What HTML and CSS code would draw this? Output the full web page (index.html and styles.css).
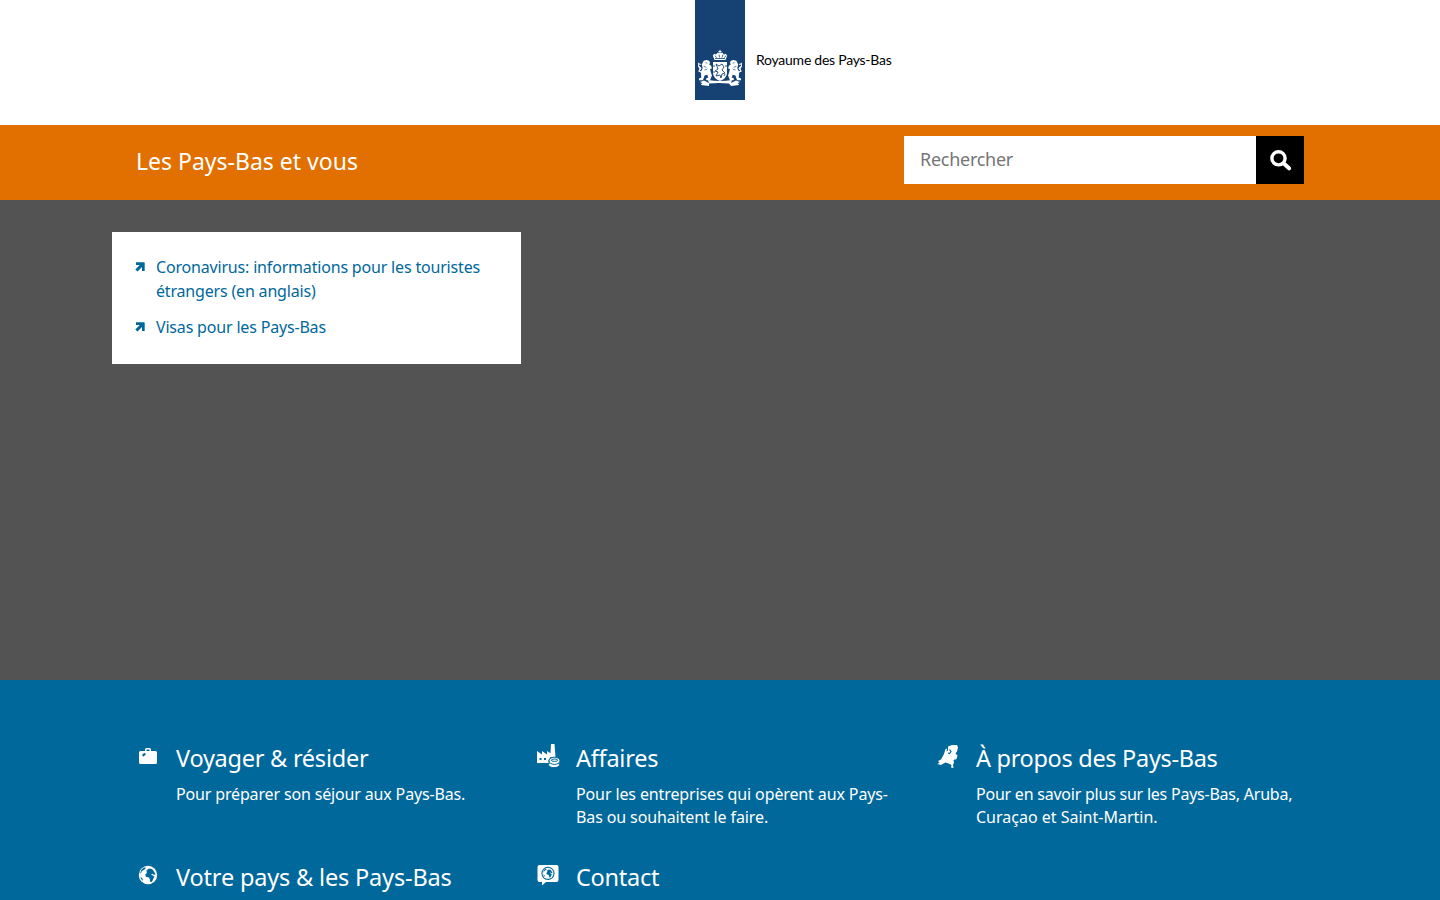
FILE: index.html
```html
<!DOCTYPE html>
<html lang="fr">
<head>
<meta charset="utf-8">
<title>Les Pays-Bas et vous</title>
<link rel="stylesheet" href="styles.css">
</head>
<body>
<svg class="defs" aria-hidden="true">
  <symbol id="external" viewBox="0 0 10 10"><path d="M1 .3h8q.7 0 .7.700v8H7V5L2.500 9.600.3 7.400 4.800 2.900H1z"/></symbol>
  <symbol id="globe" viewBox="0 0 20 20"><circle cx="10" cy="10" r="9.200" fill="#fff"/><path fill="#01689b" d="M8.500 5.500L11 3.500l3 .5 2 2.500 1.500 3-2 .3-1-1-1.500.4 2 1.600 1.500 1-1.200 2-1.300 3-1.800.2-.4-3-1.300-1.700-2.500-.4-.7-2.400 1.500-1.500zM6 2.500L8 2.800 6.500 4.500 4 6l-1 2-1 .5L3.500 4.500zM2.500 12l2 1.500L5 16l-2-2z"/></symbol>
  <symbol id="lion" viewBox="0 0 15 26">
    <path d="M6 2l3-1 3 1 1 2-1 2 2 1 1 3-2 1 1 4 1 3-2 5H9l-.5-2 2.500-1-1-3-3 1-1 3-1 2H1v-2l2.500-1L3 14l2-4-1-4z"/>
    <path fill="none" stroke="#fff" stroke-width="1.300" d="M5 15L1 13l2-3-3-3V4M0 5l3 1"/>
    <path fill="none" stroke="#154273" stroke-width=".7" d="M8 4l2 .5M6 8l3 1M7 12l3-1"/>
  </symbol>
</svg>
<header class="masthead">
  <div class="brand">
    <div class="ribbon">
      <svg class="arms" viewBox="0 0 46 37" fill="#fff">
        <path d="M17.500 10L15.800 5.500l1.500-1.700 1.700.7 1.800-2 1.700.7V2h-1V1h1V0h1v1h1v1h-1v1.200l1.700-.7 1.800 2 1.700-.7 1.500 1.700L28.500 10z"/>
        <path d="M18 5.500l1.500 2.300M22 4.500l.5 3M26 4.500l-1 3M29 5.500l-1.500 2.300M18 8.500h10" stroke="#154273" stroke-width=".8"/>
        <use href="#lion" x="1" y="9" width="14" height="24"/>
        <use href="#lion" width="14" height="24" transform="translate(45 9) scale(-1 1)"/>
        <path d="M1 16l3 2-1 2zM45 16l-3 2 1 2z"/>
        <path d="M16 12h14v11q0 5-7 8-7-3-7-8z"/>
        <path d="M19 14l3 2 3-2 2 3-2 3 3 3-3 1-1 4-1-3-4 1 2-4-3-1 3-2zM17 15v2M29 15v2M17 21v2M28 24l-1 2" fill="none" stroke="#154273" stroke-width=".9"/>
        <path d="M3 32l4-1.500L12 33l-1-3q12 2 24 0l-1 3 5-2.500 4 1.500-2 1 1 2-8 1-2-2.500q-10-1-20 0L12 36l-8-1 1-2z"/>
      </svg>
    </div>
    <span class="kingdom">Royaume des Pays-Bas</span>
  </div>
</header>
<div class="titlebar">
  <div class="container titlebar-inner">
    <span class="site-title">Les Pays-Bas et vous</span>
    <form class="search">
      <input type="text" placeholder="Rechercher" aria-label="Rechercher">
      <button type="button" aria-label="Rechercher"><svg viewBox="0 0 22 22" width="22" height="22" fill="none" stroke="#fff"><circle cx="8.500" cy="8.300" r="6.600" stroke-width="3.400"/><path d="M13.800 13.500l5.300 4.800" stroke-width="4" stroke-linecap="round"/></svg></button>
    </form>
  </div>
</div>
<main class="hero">
  <div class="container">
    <ul class="links">
      <li><svg class="arrow"><use href="#external"/></svg><a>Coronavirus: informations pour les touristes<br>étrangers (en anglais)</a></li>
      <li><svg class="arrow"><use href="#external"/></svg><a>Visas pour les Pays-Bas</a></li>
    </ul>
  </div>
</main>
<section class="topics">
  <div class="container grid">
    <article class="topic">
      <svg class="icon" viewBox="0 0 24 24"><path fill="#fff" fill-rule="evenodd" d="M9 7V5.500Q9 4 10.500 4h3Q15 4 15 5.500V7h4.500Q21 7 21 8.500v10q0 1.500-1.500 1.500h-15Q3 20 3 18.500v-10Q3 7 4.500 7zm1.500-1.500V7h3V5.500z"/><path d="M7.300 11.300l1.200-1.200" stroke="#01689b" stroke-width="2.200" stroke-linecap="round"/></svg>
      <div><h2>Voyager &amp; résider</h2><p class="travel">Pour préparer son séjour aux Pays-Bas.</p></div>
    </article>
    <article class="topic">
      <svg class="icon" viewBox="0 0 24 24"><path fill="#fff" d="M1 19V7l5 3.500V7l5 3.500V7l3.500 2.200L15 0h3.500L19.500 13h-5l-2 3v3z"/><path fill="#01689b" d="M3.500 14h2v2h-2zM8 14h2v2H8z"/><g fill="#fff" stroke="#01689b" stroke-width="1"><ellipse cx="18" cy="20.700" rx="5.500" ry="3"/><ellipse cx="18.500" cy="16.800" rx="5.500" ry="3.600"/><ellipse cx="18.500" cy="16.200" rx="3.300" ry="1.200"/></g></svg>
      <div><h2>Affaires</h2><p>Pour les entreprises qui opèrent aux Pays-<br>Bas ou souhaitent le faire.</p></div>
    </article>
    <article class="topic">
      <svg class="icon" viewBox="0 0 24 24"><path fill="#fff" d="M12 2.500l4-1.500h5l1 2.500-1 4-1.500 2 2 2-1 3.500-3 1 .5 3-1 1.500.5 3.500-2.500-.5.500-2.500-3-1.500-3-1-2 1L5 21l-3.500-1 2-1.500L2 17l3-1.500L8 10l1.500-5 1.500-.5-.5 3 1.500-1z"/><path d="M13.500 5.500l1.500 2-1.500 2-1.500-.5" fill="none" stroke="#01689b" stroke-width="1.200"/></svg>
      <div><h2 class="about-title">À propos des Pays-Bas</h2><p><span class="about">Pour en savoir plus sur les Pays-Bas, Aruba,</span><br><span class="islands">Curaçao et Saint-Martin.</span></p></div>
    </article>
    <article class="topic">
      <svg class="icon" viewBox="0 0 24 24"><use href="#globe" x="2" y="2" width="20" height="20"/></svg>
      <div><h2 class="country-title">Votre pays &amp; les Pays-Bas</h2></div>
    </article>
    <article class="topic">
      <svg class="icon" viewBox="0 0 24 24"><path fill="#fff" d="M3.500 2h17q2 0 2 2v13q0 2-2 2H10l-4 3.500V19H3.500q-2 0-2-2V4q0-2 2-2z"/><circle cx="12" cy="10.300" r="6.600" fill="#01689b"/><use href="#globe" x="6" y="4.300" width="12" height="12"/></svg>
      <div><h2>Contact</h2></div>
    </article>
  </div>
</section>
</body>
</html>
```
FILE: styles.css
```css
* { box-sizing: border-box; }
html { height: 100%; overflow: hidden; }
body { margin: 0; height: 900px; overflow: hidden; font: 16px/24px "Noto Sans", sans-serif; color: #fff; background: #fff; }
.defs { position: absolute; width: 0; height: 0; }
.masthead { height: 125px; padding-left: 695px; }
.brand { display: flex; gap: 11px; }
.ribbon { width: 50px; height: 100px; background: #154273; padding: 50px 2px 0; }
.arms { display: block; width: 46px; height: 37px; }
.kingdom { margin-top: 48px; font-family: Lato, sans-serif; font-size: 14px; letter-spacing: -.25px; color: #000; white-space: nowrap; }
.container { width: 1216px; margin: 0 auto; }
.titlebar { height: 75px; background: #e17000; }
.titlebar-inner { display: flex; justify-content: space-between; padding: 11px 24px 0; }
.site-title { font-size: 23px; line-height: 51px; white-space: nowrap; }
.search { display: flex; width: 400px; height: 48px; }
.search input { width: 352px; border: 0; padding: 0 16px 2px; border-radius: 0; font: 18px "Noto Sans", sans-serif; letter-spacing: -.27px; background: #fff; }
.search input::placeholder { color: #757575; opacity: 1; }
.search button { width: 48px; border: 0; padding: 1px 0 0 2px; background: #000; display: grid; place-items: center; }
.hero { height: 480px; padding-top: 32px; background: #535353; }
.links { list-style: none; width: 409px; height: 132px; margin: 0; padding: 23px 24px; background: #fff; color: #01689b; letter-spacing: -.18px; }
.links li { display: flex; gap: 11px; margin-bottom: 12px; }
.arrow { width: 10px; height: 10px; margin: 7px 0 0 -1px; fill: #01689b; flex: none; }
.links a, h2, p { white-space: nowrap; }
.topics { height: 220px; padding-top: 62px; background: #01689b; overflow: hidden; }
.grid { display: grid; grid-template-columns: repeat(3, 400px); grid-template-rows: 119px 119px; padding-left: 24px; }
.topic { display: flex; gap: 16px; }
.icon { width: 24px; height: 24px; margin-top: 2px; flex: none; }
h2 { margin: 0 0 8px; font-size: 23.5px; line-height: 33px; font-weight: 400; letter-spacing: -.25px; }
.about-title { letter-spacing: -.31px; }
.country-title { letter-spacing: -.17px; }
p { margin: 0; line-height: 23px; letter-spacing: -.12px; }
.travel { letter-spacing: -.155px; }
.about { letter-spacing: -.23px; }
.islands { letter-spacing: 0; }
```
